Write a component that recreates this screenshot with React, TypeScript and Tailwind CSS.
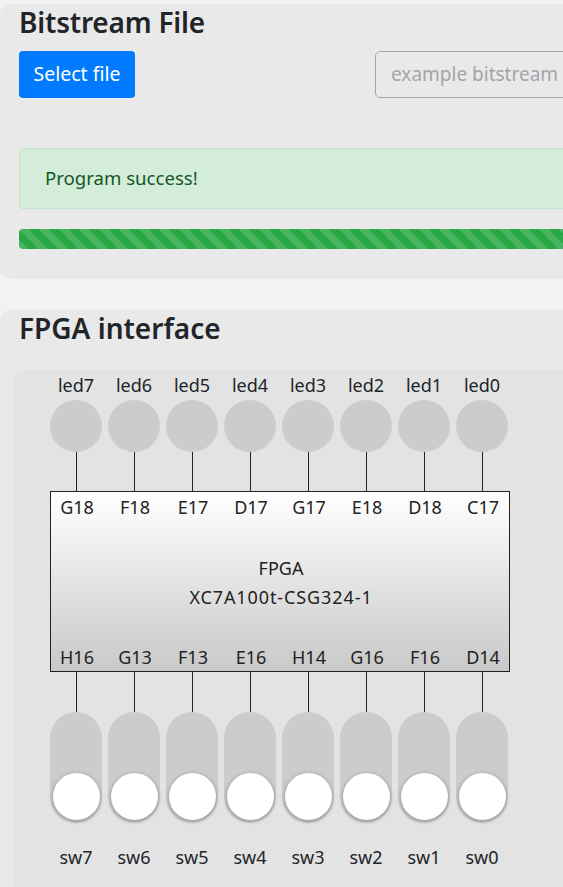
import React from "react";

const leds = ["led7", "led6", "led5", "led4", "led3", "led2", "led1", "led0"];
const topPins = ["G18", "F18", "E17", "D17", "G17", "E18", "D18", "C17"];
const bottomPins = ["H16", "G13", "F13", "E16", "H14", "G16", "F16", "D14"];
const sws = ["sw7", "sw6", "sw5", "sw4", "sw3", "sw2", "sw1", "sw0"];

function Row({ children }: { children: React.ReactNode }) {
  return <div className="grid grid-cols-[repeat(8,52px)] gap-x-[6px]">{children}</div>;
}

export default function App() {
  return (
    <div className="w-[563px] h-[887px] overflow-hidden bg-[#f2f2f2] text-[#212529] font-['Noto_Sans',sans-serif]">
      <div className="w-[640px] pt-[4px]">
        {/* Bitstream card */}
        <section className="bg-[#e9e9e9] rounded-[10px] pl-[19px] pt-[2px] pb-[30px]">
          <h3 className="text-[28px] leading-[1.2] font-semibold tracking-[-0.2px]">Bitstream File</h3>
          <div className="mt-[11px] flex items-center">
            <button className="h-[47px] w-[116px] rounded-[4px] bg-[#007bff] text-white text-[19.5px]">
              Select file
            </button>
            <div className="ml-[240px] h-[47px] w-[240px] rounded-[5px] border border-[#a3a6aa] flex items-center pl-[15px] text-[19px] text-[#a2a5a9] whitespace-nowrap">
              <span>example bitstream</span>
              <span className="ml-[4px] text-[9px] text-[#5f6266]">▼</span>
            </div>
          </div>
          <div className="mt-[50px] h-[61px] rounded-[4px] border border-[#c3e6cb] bg-[#d4edda] text-[#155724] text-[18.6px] flex items-center pl-[25px]">
            Program success!
          </div>
          <div className="mt-[20px] h-[20px] rounded-[4px] bg-[#28a745] bg-[linear-gradient(45deg,rgba(255,255,255,.15)_25%,transparent_25%,transparent_50%,rgba(255,255,255,.15)_50%,rgba(255,255,255,.15)_75%,transparent_75%,transparent)] bg-[length:20px_20px]" />
        </section>

        {/* FPGA card */}
        <section className="mt-[31px] bg-[#e9e9e9] rounded-[10px] pl-[13px] pt-[2px] h-[600px]">
          <h3 className="pl-[6px] text-[28px] leading-[1.2] font-semibold">FPGA interface</h3>
          <div className="mt-[25px] bg-[#e3e3e3] rounded-[10px] pl-[37px] pt-[2px] pb-[20px] text-[18px] leading-[27px]">
            <Row>
              {leds.map((l) => (
                <div key={l} className="flex flex-col items-center">
                  <div className="text-center">{l}</div>
                  <div className="mt-px w-[52px] h-[52px] rounded-full bg-[#cccccc]" />
                  <div className="w-px h-[39px] bg-[#222]" />
                </div>
              ))}
            </Row>
            <div className="w-[460px] h-[181px] border border-[#222] bg-[linear-gradient(to_bottom,#ffffff,#c9c9c9)] flex flex-col justify-between text-[#222]">
              <Row>
                {topPins.map((p) => (
                  <div key={p} className="text-center pt-[2px]">{p}</div>
                ))}
              </Row>
              <div className="text-center leading-[29px] pl-[2px]">
                <div>FPGA</div>
                <div className="tracking-[0.9px]">XC7A100t-CSG324-1</div>
              </div>
              <Row>
                {bottomPins.map((p) => (
                  <div key={p} className="text-center">{p}</div>
                ))}
              </Row>
            </div>
            <Row>
              {sws.map((s) => (
                <div key={s} className="flex flex-col items-center">
                  <div className="w-px h-[40px] bg-[#222]" />
                  <div className="w-[52px] h-[111px] rounded-full bg-[#cccccc] flex flex-col justify-end items-center pb-[3px]">
                    <div className="w-[47px] h-[47px] rounded-full bg-white shadow-[0_1px_4px_rgba(0,0,0,0.35)]" />
                  </div>
                  <div className="mt-[21px] text-center">{s}</div>
                </div>
              ))}
            </Row>
          </div>
        </section>
      </div>
    </div>
  );
}
